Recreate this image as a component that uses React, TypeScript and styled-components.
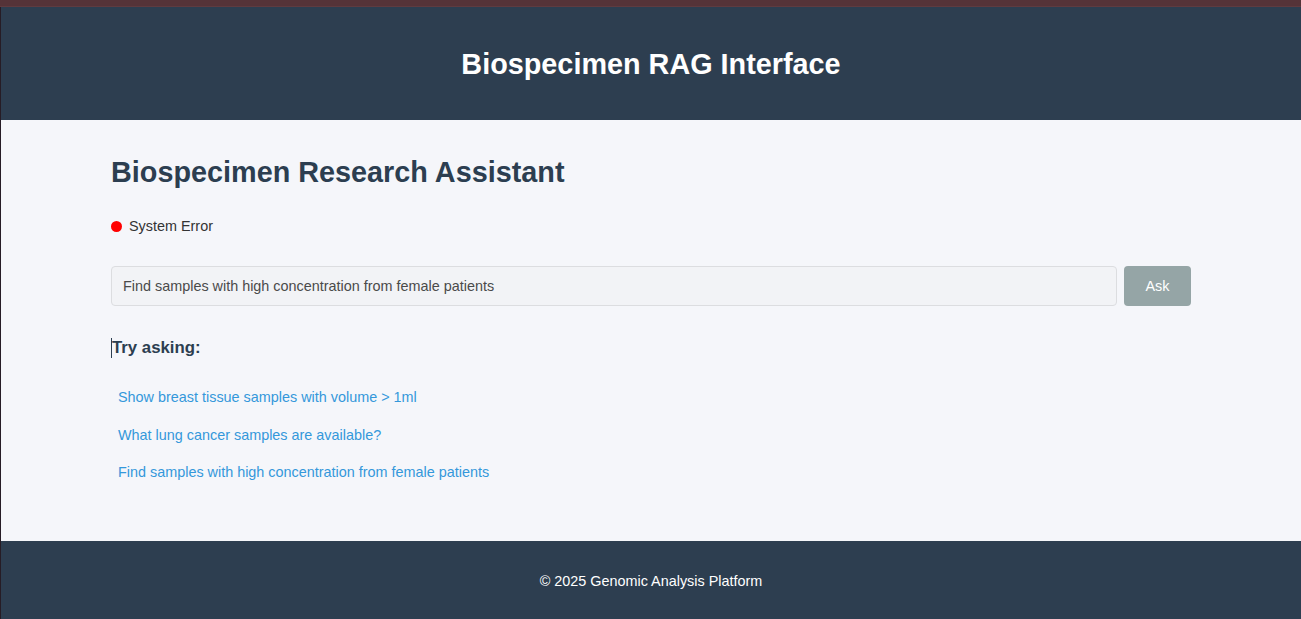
import React from "react";
import styled, { createGlobalStyle } from "styled-components";

const Global = createGlobalStyle`
  html, body { margin: 0; padding: 0; }
  body {
    background: #261c25;
    font-family: "Liberation Sans", Arial, sans-serif;
  }
  * { box-sizing: border-box; }
`;

const Page = styled.div`
  margin-left: 1px;
  min-height: 612px;
  display: flex;
  flex-direction: column;
  background: #f5f6fa;
`;

const TopStrip = styled.div`
  height: 7px;
  background: #553338;
  border-bottom: 1px solid #5f3b40;
`;

const Header = styled.header`
  background: #2d3e50;
  padding: 41px 20px 40px;
  text-align: center;
`;

const HeaderTitle = styled.h1`
  margin: 0;
  color: #ffffff;
  font-size: 28.8px;
  line-height: 32px;
  font-weight: 700;
`;

const Main = styled.main`
  padding: 36px 0 49px;
`;

const Container = styled.div`
  max-width: 1080px;
  margin: 0 auto;
  display: flex;
  flex-direction: column;
`;

const Title = styled.h2`
  margin: 0;
  color: #2c3e50;
  font-size: 28.8px;
  line-height: 32px;
  font-weight: 700;
`;

const Status = styled.div`
  margin-top: 29px;
  display: flex;
  align-items: center;
  gap: 7px;
  font-size: 14.4px;
  line-height: 18px;
  color: #333333;
`;

const Dot = styled.span<{ $color: string }>`
  width: 11px;
  height: 11px;
  border-radius: 50%;
  background: ${(p) => p.$color};
`;

const QueryRow = styled.div`
  margin-top: 31px;
  display: flex;
  gap: 7px;
`;

const Input = styled.input`
  flex: 1;
  height: 40px;
  padding: 0 11px;
  border: 1px solid #dcdde0;
  border-radius: 4px;
  background: #f2f3f6;
  color: #4a4a4a;
  font-family: "Liberation Sans", Arial, sans-serif;
  font-size: 14.4px;
  outline: none;
`;

const AskButton = styled.button`
  width: 67px;
  height: 40px;
  border: none;
  border-radius: 4px;
  background: #95a5a6;
  color: #ffffff;
  font-family: "Liberation Sans", Arial, sans-serif;
  font-size: 14.4px;
`;

const TryHeading = styled.h3`
  margin: 32px 0 0;
  color: #2c3e50;
  font-size: 16.8px;
  line-height: 20px;
  font-weight: 700;
  border-left: 1px solid #2c3e50;
`;

const Suggestions = styled.div`
  margin-top: 21px;
  display: flex;
  flex-direction: column;
`;

const Suggestion = styled.button`
  align-self: flex-start;
  background: none;
  border: none;
  padding: 8px 7px;
  color: #3498db;
  font-family: "Liberation Sans", Arial, sans-serif;
  font-size: 14.4px;
  line-height: 21.5px;
  text-align: left;
  cursor: pointer;
`;

const Footer = styled.footer`
  margin-top: auto;
  background: #2d3e50;
  padding: 31px 20px 30px;
  text-align: center;
  color: #ffffff;
  font-size: 14.4px;
  line-height: 18px;
`;

const suggestions = [
  "Show breast tissue samples with volume > 1ml",
  "What lung cancer samples are available?",
  "Find samples with high concentration from female patients",
];

export default function App() {
  return (
    <>
      <Global />
      <TopStrip />
      <Page>
        <Header>
          <HeaderTitle>Biospecimen RAG Interface</HeaderTitle>
        </Header>
        <Main>
          <Container>
            <Title>Biospecimen Research Assistant</Title>
            <Status>
              <Dot $color="#ff0000" />
              System Error
            </Status>
            <QueryRow>
              <Input defaultValue="Find samples with high concentration from female patients" />
              <AskButton>Ask</AskButton>
            </QueryRow>
            <TryHeading>Try asking:</TryHeading>
            <Suggestions>
              {suggestions.map((s) => (
                <Suggestion key={s}>{s}</Suggestion>
              ))}
            </Suggestions>
          </Container>
        </Main>
        <Footer>© 2025 Genomic Analysis Platform</Footer>
      </Page>
    </>
  );
}
